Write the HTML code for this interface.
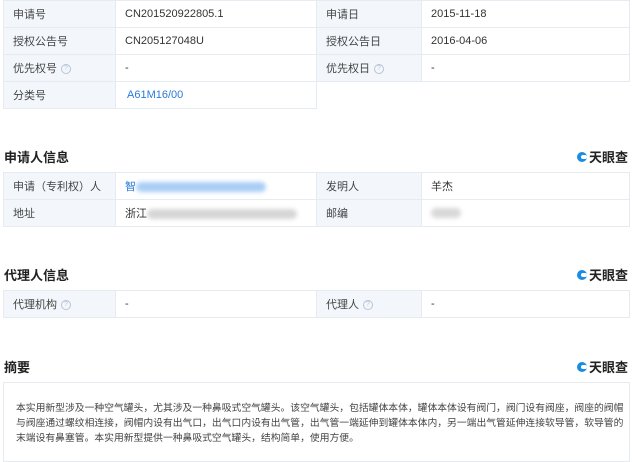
<!DOCTYPE html>
<html><head><meta charset="utf-8"><style>
*{margin:0;padding:0;box-sizing:border-box}
body{width:640px;height:456px;overflow:hidden;background:#fff;font-family:"Liberation Sans","Noto Sans CJK SC",sans-serif;font-size:11px;color:#333;position:relative}
table{position:absolute;left:3px;width:627px;border-collapse:collapse;table-layout:fixed}
td{border:1px solid #e6ebf2;height:27px;padding:0 0 0 9px;white-space:nowrap;overflow:hidden}
td.l{background:#f3f7fc;color:#444}
.q{display:inline-block;width:10px;height:10px;border:1px solid #b8c4d4;border-radius:50%;font-size:7px;line-height:8px;text-align:center;color:#b8c4d4;margin-left:4px;vertical-align:middle}
h3{position:absolute;left:4px;font-size:13px;font-weight:bold;color:#222}
.logo{position:absolute;right:12px;font-size:13px;font-weight:bold;color:#222;display:flex;align-items:center}
.logo i{display:inline-block;width:10px;height:10px;border-radius:50%;background:#1a8de0;margin-right:2px;position:relative}
.logo i:after{content:"";position:absolute;left:4px;top:3px;width:6px;height:4px;background:#fff;border-radius:2px}
.blur{display:inline-block;vertical-align:middle;border-radius:6px;filter:blur(2px)}
.abs{position:absolute;left:3px;top:382px;width:627px;height:80px;border:1px solid #e6ebf2;padding:18px 0 0 12px;font-size:9.8px;line-height:15px;color:#444;white-space:nowrap;overflow:hidden}
</style></head><body>
<table style="top:0">
<colgroup><col style="width:112px"><col style="width:201px"><col style="width:105px"><col></colgroup>
<tr><td class="l">申请号</td><td>CN201520922805.1</td><td class="l">申请日</td><td>2015-11-18</td></tr>
<tr><td class="l">授权公告号</td><td>CN205127048U</td><td class="l">授权公告日</td><td>2016-04-06</td></tr>
<tr><td class="l">优先权号<span class="q">?</span></td><td>-</td><td class="l">优先权日<span class="q">?</span></td><td>-</td></tr>
<tr><td class="l">分类号</td><td style="color:#2a7ad8;padding-left:11px">A61M16/00</td><td style="border:none" colspan="2"></td></tr>
</table>
<h3 style="top:147px">申请人信息</h3><div class="logo" style="top:147px"><i></i>天眼查</div>
<table style="top:172px">
<colgroup><col style="width:112px"><col style="width:201px"><col style="width:105px"><col></colgroup>
<tr><td class="l">申请（专利权）人</td><td><span style="color:#2a7ad8">智</span><span class="blur" style="width:130px;height:10px;background:#a9cef6"></span></td><td class="l">发明人</td><td>羊杰</td></tr>
<tr><td class="l">地址</td><td>浙江<span class="blur" style="width:150px;height:10px;background:#d6d6d6"></span></td><td class="l">邮编</td><td><span class="blur" style="width:30px;height:10px;background:#d8d8d8"></span></td></tr>
</table>
<h3 style="top:265px">代理人信息</h3><div class="logo" style="top:265px"><i></i>天眼查</div>
<table style="top:290px">
<colgroup><col style="width:112px"><col style="width:201px"><col style="width:105px"><col></colgroup>
<tr><td class="l">代理机构<span class="q">?</span></td><td>-</td><td class="l">代理人<span class="q">?</span></td><td>-</td></tr>
</table>
<h3 style="top:357px">摘要</h3><div class="logo" style="top:357px"><i></i>天眼查</div>
<div class="abs">本实用新型涉及一种空气罐头，尤其涉及一种鼻吸式空气罐头。该空气罐头，包括罐体本体，罐体本体设有阀门，阀门设有阀座，阀座的阀帽<br>与阀座通过螺纹相连接，阀帽内设有出气口，出气口内设有出气管，出气管一端延伸到罐体本体内，另一端出气管延伸连接软导管，软导管的<br>末端设有鼻塞管。本实用新型提供一种鼻吸式空气罐头，结构简单，使用方便。</div>
</body></html>
